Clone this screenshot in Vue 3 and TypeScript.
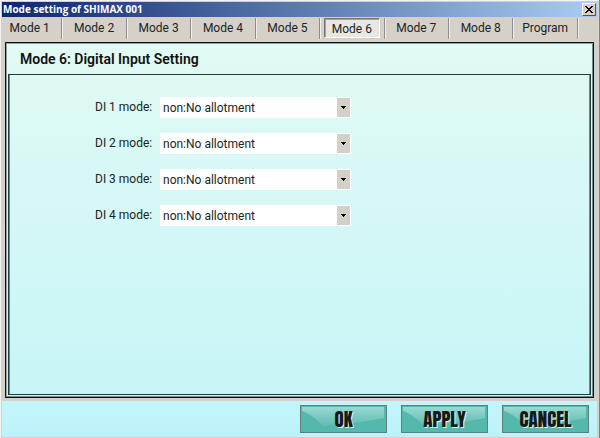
<script setup lang="ts">
import { ref } from 'vue'

const tabs: string[] = ['Mode 1', 'Mode 2', 'Mode 3', 'Mode 4', 'Mode 5', 'Mode 6', 'Mode 7', 'Mode 8', 'Program']
const active = ref<string>('Mode 6')

interface InputRow {
  id: string
  label: string
  value: string
}

const inputs = ref<InputRow[]>([1, 2, 3, 4].map((n) => ({ id: `di-${n}`, label: `DI ${n} mode:`, value: 'non' })))
const actions: string[] = ['OK', 'APPLY', 'CANCEL']
</script>

<template>
  <main class="window">
    <header class="titlebar">
      <h1 class="title">Mode setting of SHIMAX 001</h1>
      <button class="close" type="button" aria-label="Close">
        <svg width="8" height="7" viewBox="0 0 8 7" shape-rendering="crispEdges">
          <path d="M0 0h2v1h1v1h2V1h1V0h2v1H7v1H6v1H5v1h1v1h1v1h1v1H6V6H5V5H3v1H2v1H0V6h1V5h1V4h1V3H2V2H1V1H0z" fill="#000" />
        </svg>
      </button>
    </header>
    <nav class="tabs">
      <div v-for="tab in tabs" :key="tab" class="cell">
        <button class="tab" :class="{ active: tab === active }" type="button" @click="active = tab">{{ tab }}</button>
      </div>
    </nav>
    <div class="body">
      <section class="panel">
        <h2 class="heading">Mode 6: Digital Input Setting</h2>
        <form class="fields">
          <div v-for="row in inputs" :key="row.id" class="row">
            <label class="label" :for="row.id">{{ row.label }}</label>
            <div class="combo">
              <select :id="row.id" v-model="row.value" class="select">
                <option value="non">non:No allotment</option>
              </select>
              <span class="arrow">
                <svg width="5" height="3" viewBox="0 0 5 3" shape-rendering="crispEdges">
                  <path d="M0 0h5v1H4v1H3v1H2V2H1V1H0z" fill="#000" />
                </svg>
              </span>
            </div>
          </div>
        </form>
      </section>
    </div>
    <footer class="footer">
      <button v-for="action in actions" :key="action" class="action" type="button">
        <svg class="gloss" viewBox="0 0 86 26" preserveAspectRatio="none">
          <defs>
            <linearGradient :id="`gloss-${action}`" x1="0" y1="0" x2="0" y2="1">
              <stop offset="0" stop-color="#9ad9d2" />
              <stop offset="1" stop-color="#5cbcb1" />
            </linearGradient>
          </defs>
          <path d="M1 1H84V12C68 15 46 19 22 20C16 13 8 7 1 5Z" :fill="`url(#gloss-${action})`" />
        </svg>
        <span class="caption">{{ action }}</span>
      </button>
    </footer>
  </main>
</template>

<style>
body {
  margin: 0;
}
</style>

<style scoped>
.window {
  box-sizing: border-box;
  display: flex;
  flex-direction: column;
  min-height: 100vh;
  padding: 2px 2px 1px;
  border-right: 1px solid #85827d;
  background: #d5d1c9;
  box-shadow: inset 1px 1px #f4f4f2;
  color: #1c2423;
  font-family: Roboto, "Liberation Sans", Arial, sans-serif;
  font-size: 12px;
}

.titlebar {
  display: flex;
  align-items: center;
  justify-content: space-between;
  height: 15px;
  padding-right: 1px;
  background: linear-gradient(90deg, #0d276c, #a8cdf3);
}

.title {
  margin: 0;
  padding-left: 1px;
  color: #fff;
  font: bold 10px/15px "Open Sans", "Noto Sans", sans-serif;
}

.close {
  display: flex;
  align-items: center;
  justify-content: center;
  width: 14px;
  height: 13px;
  padding: 0;
  border: 1px solid;
  border-color: #fff #55524e #55524e #fff;
  background: #d5d1c9;
}

.tabs {
  display: grid;
  grid-template-columns: 60fr repeat(8, 64fr) 19fr;
  height: 25px;
}

.cell {
  box-sizing: border-box;
  height: 21px;
  margin-top: 1px;
  padding: 0 4px;
  border-right: 1px solid #8e8e92;
  box-shadow: 1px 0 #f1efeb;
}

.cell:first-child {
  padding-left: 0;
}

.tab {
  box-sizing: border-box;
  width: 100%;
  height: 20px;
  padding: 0;
  border: 1px solid transparent;
  background: none;
  color: inherit;
  font: inherit;
  line-height: 18px;
}

.tab.active {
  border-color: #77756f #fff #fff #77756f;
  background: #e9e7e2;
  box-shadow: inset 1px 1px #a5a29c;
  line-height: 20px;
}

.body {
  flex: 1;
  display: flex;
  padding: 0 3px 3px;
}

.panel {
  flex: 1;
  display: flex;
  flex-direction: column;
  padding: 0 2px 2px;
  border: 1px solid #111;
  background: linear-gradient(#e1faf4, #c8f5f8);
  box-shadow: inset 1px 1px #8da5a2, inset -1px -1px #6d8c91;
}

.heading {
  height: 31px;
  margin: 0;
  padding-left: 12px;
  color: #111;
  font-size: 14px;
  font-weight: 600;
  line-height: 33px;
}

.fields {
  flex: 1;
  display: flex;
  flex-direction: column;
  gap: 15px;
  padding: 22px 0 22px 86px;
  border: 1px solid #263b3c;
  box-shadow: inset 1px 0 #718889, inset -1px 0 #718889;
}

.row {
  display: grid;
  grid-template-columns: 65px minmax(0, 191px);
}

.label {
  line-height: 21px;
}

.combo {
  position: relative;
}

.select {
  display: block;
  box-sizing: border-box;
  width: 100%;
  height: 21px;
  padding: 0 18px 0 3px;
  border: 0;
  border-radius: 0;
  appearance: none;
  background: #fff;
  color: inherit;
  font: inherit;
}

.arrow {
  position: absolute;
  inset: 1px 1px 1px auto;
  display: flex;
  align-items: center;
  justify-content: center;
  width: 13px;
  background: #d4d0c8;
  pointer-events: none;
}

.footer {
  display: flex;
  justify-content: flex-end;
  gap: 14px;
  padding: 4px 8px 4px 0;
  background: linear-gradient(#c4f5fb, #bdf2fa);
}

.action {
  position: relative;
  box-sizing: border-box;
  width: 87px;
  height: 28px;
  padding: 0;
  border: 1px solid #5f7f7c;
  background: #54b8ad;
  color: #161a1a;
  font: 400 19px/26px Impact, Anton, "Liberation Sans", sans-serif;
  text-shadow: 1px 1px #d7f3ee;
}

.gloss {
  position: absolute;
  inset: 0;
  width: 100%;
  height: 100%;
}

.caption {
  position: relative;
}
</style>
